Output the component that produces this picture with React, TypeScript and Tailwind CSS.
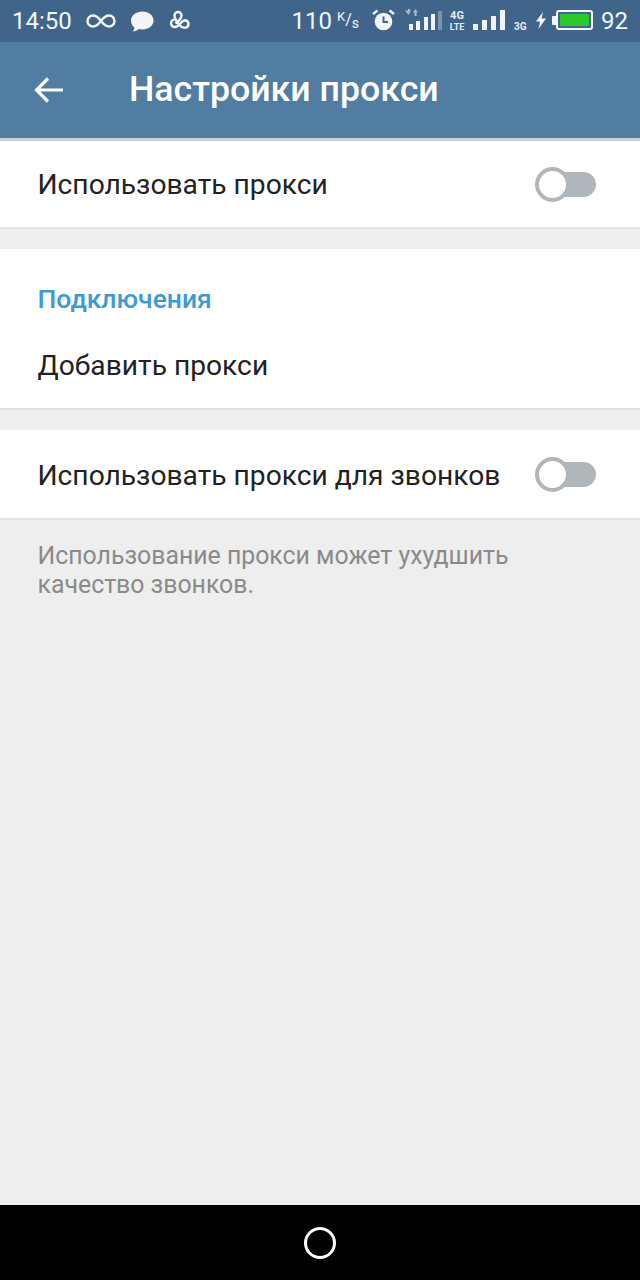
import React from "react";

function Bars({ heights, dim, barClass }: { heights: number[]; dim?: number; barClass: string }) {
  return (
    <div className={barClass}>
      {heights.map((h, i) => (
        <div
          key={i}
          className={i === dim ? "flex-1 bg-[#7b94ab]" : "flex-1 bg-[#f1f4f7]"}
          style={{ height: h }}
        />
      ))}
    </div>
  );
}

function StatusBar() {
  return (
    <div className="h-[42px] bg-[#41658a] text-[#f3f5f7] flex items-center font-['Roboto',sans-serif] shrink-0">
      <span className="ml-[12px] w-[61px] text-[24px] leading-none">14:50</span>
      <svg className="ml-[13px]" width="30" height="16" viewBox="0 0 30 16" fill="none" stroke="#f3f5f7" strokeWidth="2.400">
        <path d="M15 8c-3-4-5-5.500-8-5.500a5.500 5.500 0 0 0 0 11c3 0 5-1.500 8-5.500s5-5.500 8-5.500a5.500 5.500 0 0 1 0 11c-3 0-5-1.500-8-5.500z" />
      </svg>
      <svg className="ml-[14px]" width="24" height="21" viewBox="0 0 24 21" fill="#f3f5f7">
        <path d="M12.500 0.500c6 0 11 3.800 11 9s-5 9-11 9c-1.300 0-2.500-.2-3.700-.5C7 19.500 4.500 20.500 2.500 20.300 4 19.300 4.500 17.800 4.300 16.300 2 14.700 1 12.300 1 9.500c0-5.200 5.500-9 11.500-9z" />
      </svg>
      <svg className="ml-[13px]" width="24" height="22" viewBox="0 0 24 22" fill="none" stroke="#f3f5f7" strokeWidth="2.400">
        <path d="M8.500 13.500C11 11 14.500 9.500 14.500 5.500a3.500 3.500 0 0 0-7 0c0 4 3 7 5.500 10 1.500 1.800 3.500 2.500 5.500 2.200a3.800 3.800 0 0 0-.5-7.500c-2 0-3.500 1.800-5 3.500-1.500 2-3 3.300-5 3.300a3.700 3.700 0 0 1-.5-7.400" />
      </svg>
      <div className="ml-auto flex items-center mr-[12px]">
        <span className="text-[24px] leading-none">110</span>
        <div className="ml-[5px] w-[22px] h-[20px] mb-[3px] flex justify-between">
          <span className="self-start text-[13px] leading-none">K</span>
          <span className="self-center text-[16px] leading-none">/</span>
          <span className="self-end text-[14px] leading-none">s</span>
        </div>
        <svg className="ml-[13px] mb-[3px]" width="23" height="22" viewBox="0 0 23 22">
          <circle cx="11.500" cy="12.500" r="8.800" fill="#f3f5f7" />
          <path d="M11.500 7.500v5.500h4.500" fill="none" stroke="#41658a" strokeWidth="2" />
          <path d="M1 5l4.500-3.500M22 5l-4.500-3.500" stroke="#f3f5f7" strokeWidth="2.400" />
        </svg>
        <div className="ml-[14px] mb-[3px] relative w-[33px] h-[20px]">
          <Bars barClass="flex items-end gap-[3.250px] w-[33px] h-[20px]" heights={[6, 9, 13, 16, 19]} dim={4} />
          <svg className="absolute -left-[5px] -top-[1px]" width="16" height="7" viewBox="0 0 16 7" fill="#aab9c8">
            <path d="M1 1.500h3V0h2v1.500h1L4.500 6zM9 3.500 11.500 0 14 3.500h-1.500V7h-2V3.500z" />
          </svg>
        </div>
        <div className="ml-[8px] mb-[1px] w-[14px] flex flex-col items-center font-bold text-[#e6ebf0]">
          <span className="text-[11px] leading-[13px]">4G</span>
          <span className="text-[9px] leading-[10px]">LTE</span>
        </div>
        <div className="ml-[9px] mb-[3px]">
          <Bars barClass="flex items-end gap-[4px] w-[32px] h-[20px]" heights={[6, 10, 14, 20]} />
        </div>
        <span className="ml-[9px] w-[12px] text-[10px] font-bold mt-[11px] leading-none text-[#e6ebf0]">3G</span>
        <svg className="ml-[9px] mb-[2px]" width="12" height="17" viewBox="0 0 12 17" fill="#f3f5f7">
          <path d="M8 0 1 9.500h4L3.500 17 11 6.500H6.500z" />
        </svg>
        <div className="ml-[5px] mb-[2px] flex items-center">
          <div className="w-[4px] h-[9px] bg-[#f3f5f7] rounded-l-[1px]" />
          <div className="w-[37px] h-[20px] border-2 border-[#f3f5f7] rounded-[3px] p-[2px]">
            <div className="h-full w-full bg-[#2bc92b] rounded-[1px]" />
          </div>
        </div>
        <span className="ml-[8px] text-[24px] leading-none">92</span>
      </div>
    </div>
  );
}

function Toggle() {
  return (
    <div className="relative w-[61px] h-[35px] shrink-0">
      <div className="absolute left-[6px] right-0 top-[5px] h-[25px] rounded-full bg-[#b0b6ba]" />
      <div className="absolute left-0 top-0 w-[35px] h-[35px] rounded-full bg-white border-[4px] border-[#b0b6ba]" />
    </div>
  );
}

export default function App() {
  return (
    <div className="w-[640px] h-[1280px] flex flex-col bg-[#eeeeee] font-['Roboto',sans-serif] overflow-hidden">
      <StatusBar />
      <div className="h-[99px] bg-[#517da2] flex items-center shrink-0 border-b-[3px] border-[#c6d2dc]">
        <svg className="ml-[34px]" width="30" height="28" viewBox="0 0 30 28" fill="none" stroke="#ffffff" strokeWidth="3.200">
          <path d="M29 14H3M14 2.500 2.500 14 14 25.500" />
        </svg>
        <span className="ml-[65px] text-[35.700px] leading-none font-medium text-white">Настройки прокси</span>
      </div>

      <div className="h-[88px] bg-white flex items-center justify-between pl-[37.500px] pr-[44px] border-b-2 border-[#e3e3e3] shrink-0">
        <span className="mt-[2px] text-[28.200px] text-[#222222]">Использовать прокси</span>
        <Toggle />
      </div>

      <div className="h-[20px] shrink-0" />

      <div className="h-[161px] bg-white flex flex-col pl-[37.500px] border-b-2 border-[#e3e3e3] shrink-0">
        <span className="mt-[35px] text-[26.500px] leading-[30px] font-medium text-[#3e9ad3]">Подключения</span>
        <span className="mt-[34px] text-[28.200px] leading-[36px] text-[#222222]">Добавить прокси</span>
      </div>

      <div className="h-[20px] shrink-0" />

      <div className="h-[90px] bg-white flex items-center justify-between pl-[37.500px] pr-[44px] border-b-2 border-[#e3e3e3] shrink-0">
        <span className="mt-[4px] text-[28.200px] text-[#222222]">Использовать прокси для звонков</span>
        <Toggle />
      </div>

      <div className="pl-[37.500px] pt-[21px] text-[24.850px] leading-[29px] text-[#8a8a8a]">
        Использование прокси может ухудшить
        <br />
        качество звонков.
      </div>

      <div className="mt-auto h-[75px] bg-black flex items-center justify-center shrink-0">
        <div className="w-[32px] h-[32px] rounded-full border-[3px] border-white" />
      </div>
    </div>
  );
}
